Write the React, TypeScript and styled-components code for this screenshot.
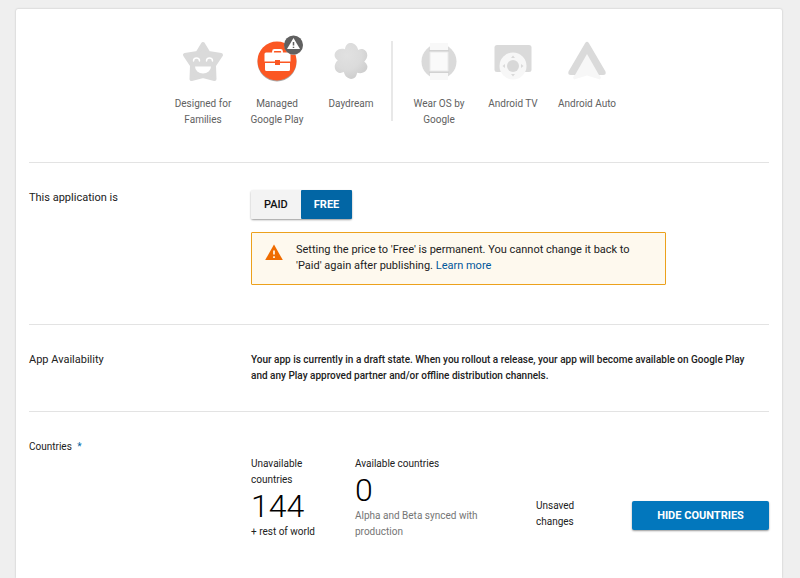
import React, { useState } from 'react';
import styled, { createGlobalStyle } from 'styled-components';

const GlobalStyle = createGlobalStyle`
  * { box-sizing: border-box; }
  body {
    margin: 0;
    background: #efefef;
    color: #212121;
    font-family: Roboto, "Liberation Sans", sans-serif;
    font-size: 10px;
    line-height: 16px;
  }
  button { font-family: inherit; }
`;

const Page = styled.div`
  display: flex;
  min-height: 100vh;
  padding: 9px 18px 0 16px;
`;

const Card = styled.main`
  flex: 1;
  min-width: 0;
  padding: 0 13px;
  background: #fff;
  border-radius: 2px 2px 0 0;
  box-shadow: 0 0 2px rgba(0, 0, 0, 0.24);
`;

const Programs = styled.section`
  display: flex;
  justify-content: center;
  height: 153px;
  padding: 24px 8px 0 0;
`;

const ProgramGroup = styled.div`
  display: flex;
`;

const GroupDivider = styled.div`
  width: 2px;
  height: 80px;
  margin: 8px 9px 0 3px;
  background: #e8e8e8;
`;

const ProgramItem = styled.div`
  display: flex;
  flex-direction: column;
  align-items: center;
  width: 74px;
  padding: 0 4px;
  color: #616161;
  text-align: center;
`;

const ProgramIcon = styled.div`
  position: relative;
  width: 56px;
  height: 56px;
  margin-bottom: 7px;

  svg { display: block; }
`;

const Badge = styled.svg`
  position: absolute;
  top: 0;
  right: 0;
`;

const Row = styled.section`
  display: grid;
  grid-template-columns: 3fr 7fr;
  padding: 27px 0;
  border-top: 1px solid #e3e3e3;
`;

const RowLabel = styled.h2<{ $small?: boolean }>`
  margin: 0;
  font-size: ${(p) => (p.$small ? 10 : 11)}px;
  font-weight: 400;
  line-height: 16px;
`;

const Required = styled.span`
  margin-left: 3px;
  color: #0067a3;
`;

const PricingBody = styled.div`
  padding-bottom: 12px;
`;

const Toggle = styled.div`
  display: flex;
  width: max-content;
  border-radius: 2px;
  box-shadow: 0 1px 2px rgba(0, 0, 0, 0.4);
`;

const ToggleButton = styled.button<{ $active: boolean }>`
  height: 29px;
  padding: 0 13px;
  border: 0;
  border-radius: 1px;
  background: ${(p) => (p.$active ? '#0266a5' : '#f3f3f3')};
  color: ${(p) => (p.$active ? '#fff' : '#111')};
  font-size: 11px;
  font-weight: ${(p) => (p.$active ? 700 : 500)};
`;

const Warning = styled.div`
  display: flex;
  gap: 12px;
  max-width: 415px;
  margin-top: 13px;
  padding: 9px 12px 10px;
  border: 1px solid #eca11c;
  border-radius: 1px;
  background: #fef9ee;
  font-size: 11px;

  svg { flex: none; margin-top: 1px; }
  p { margin: 0; }
`;

const Link = styled.a`
  color: #01579b;
  text-decoration: none;
`;

const Notice = styled.p`
  margin: 0;
  padding-right: 12px;
  font-weight: 500;
`;

const Countries = styled.div`
  display: flex;
  align-items: center;
  padding-top: 17px;
`;

const Stat = styled.div<{ $wide?: boolean }>`
  width: ${(p) => (p.$wide ? 136 : 72)}px;
  margin-right: ${(p) => (p.$wide ? 45 : 32)}px;
`;

const Figure = styled.div`
  color: #000;
  font-size: 32px;
  font-weight: 300;
  line-height: 36px;
`;

const Muted = styled.div`
  color: #757575;
`;

const Actions = styled.div`
  display: flex;
  flex: 1;
  align-items: flex-end;
  justify-content: space-between;
  margin-top: 32px;
`;

const Unsaved = styled.div`
  width: 48px;
`;

const PrimaryButton = styled.button`
  width: 137px;
  height: 29px;
  padding: 0;
  border: 0;
  border-radius: 2px;
  background: #0277bd;
  box-shadow: 0 1px 2px rgba(0, 0, 0, 0.4);
  color: #fff;
  font-size: 11px;
  font-weight: 700;
`;

const FamiliesIcon = () => (
  <svg width="56" height="56" viewBox="0 0 56 56">
    <path
      d="M28 11 33.500 20 46 22 39 32.500 39.500 46 28 43 16.500 46 17 32.500 10 22 22.500 20Z"
      fill="#dadada" stroke="#dadada" strokeWidth="4" strokeLinejoin="round"
    />
    <path d="M18.500 28a3 3 0 0 1 6 0M31.500 28a3 3 0 0 1 6 0" fill="none" stroke="#fff" strokeWidth="1.500" strokeLinecap="round" />
    <path d="M20 33.500h16a8 7 0 0 1-16 0Z" fill="#fff" />
  </svg>
);

const ManagedPlayIcon = () => (
  <>
    <svg width="56" height="56" viewBox="0 0 56 56">
      <circle cx="28" cy="29" r="19.500" fill="#a9a9a9" />
      <circle cx="28" cy="28" r="19.500" fill="#fb5723" />
      <path d="M24 20v-1.500a1.500 1.500 0 0 1 1.500-1.500h6a1.500 1.500 0 0 1 1.500 1.500V20" fill="none" stroke="#fff" strokeWidth="1.800" />
      <path d="M17 19.500h23a1.500 1.500 0 0 1 1.500 1.500v7.500H31V27h-5v1.500H15.500V21a1.500 1.500 0 0 1 1.500-1.500ZM16 30h10v2h5v-2h10v6.500a1.500 1.500 0 0 1-1.500 1.500h-22a1.500 1.500 0 0 1-1.500-1.500Z" fill="#fff" />
    </svg>
    <Badge width="22" height="22" viewBox="0 0 22 22">
      <circle cx="10.500" cy="13" r="9" fill="#bbb" />
      <circle cx="10.500" cy="12" r="9.500" fill="#606060" />
      <path d="m10.500 5 6.500 11H4Z" fill="#fff" />
      <path d="M10.500 9v3.500M10.500 13.700V15" stroke="#606060" strokeWidth="1.500" />
    </Badge>
  </>
);

const DaydreamIcon = () => (
  <svg width="56" height="56" viewBox="0 0 56 56">
    <defs>
      <radialGradient id="bloom" gradientUnits="userSpaceOnUse" cx="24" cy="22" r="24">
        <stop offset="0" stopColor="#e1e1e1" />
        <stop offset="0.600" stopColor="#dbdbdb" />
        <stop offset="1" stopColor="#cecece" />
      </radialGradient>
      <clipPath id="petals">
        {[0, 60, 120, 180, 240, 300].map((angle) => (
          <path
            key={angle}
            d="M28 28C22 24 20 15.500 24 11.500C28 8 36 11 35.500 21Z"
            transform={`rotate(${angle} 28 28)`}
          />
        ))}
        <circle cx="28" cy="28" r="10" />
      </clipPath>
    </defs>
    <rect x="8" y="8" width="40" height="40" fill="url(#bloom)" clipPath="url(#petals)" />
  </svg>
);

const WearIcon = () => (
  <svg width="56" height="56" viewBox="0 0 56 56">
    <circle cx="28" cy="28.500" r="17.500" fill="#dadada" />
    <path d="M19 10h18v7H19ZM19 40h18v7H19Z" fill="#f8f8f8" />
    <path d="M18 17h20v2H18ZM18 38h20v2H18Z" fill="#d2d2d2" />
    <rect x="19" y="19" width="18" height="19" fill="#fafafa" stroke="#eaeaea" />
  </svg>
);

const TvIcon = () => (
  <svg width="56" height="56" viewBox="0 0 56 56">
    <rect x="9.500" y="12" width="37" height="27" rx="2.500" fill="#dadada" />
    <circle cx="28" cy="33" r="13.500" fill="#f7f7f7" />
    <circle cx="28" cy="33" r="6" fill="#d8d8d8" />
    <path d="m28 22.500 2 2.500h-4ZM28 43.500l2-2.500h-4ZM17.500 33l2.500-2v4ZM38.500 33 36 31v4Z" fill="#dadada" />
  </svg>
);

const AutoIcon = () => (
  <svg width="56" height="56" viewBox="0 0 56 56">
    <path d="M28 20 42 44.500 41 46.500 28 42.500 15 46.500 14 44.500Z" fill="#f7f7f7" />
    <path d="M26.200 10q1.800-2.500 3.600 0L46.500 38.500q1 3.500-2.500 3.500h-4L28 21 16 42h-4q-3.500 0-2.500-3.500Z" fill="#dadada" />
  </svg>
);

const WarningIcon = () => (
  <svg width="20" height="20" viewBox="0 0 20 20" aria-hidden="true">
    <path d="m10 1.500 8.800 15.500H1.200Z" fill="#ef6c00" />
    <path d="M10 7.500v4M10 13.200V15" stroke="#fef9ee" strokeWidth="1.700" />
  </svg>
);

type Program = { name: string; Icon: () => React.JSX.Element };

const playPrograms: Program[] = [
  { name: 'Designed for Families', Icon: FamiliesIcon },
  { name: 'Managed Google Play', Icon: ManagedPlayIcon },
  { name: 'Daydream', Icon: DaydreamIcon },
];

const devicePrograms: Program[] = [
  { name: 'Wear OS by Google', Icon: WearIcon },
  { name: 'Android TV', Icon: TvIcon },
  { name: 'Android Auto', Icon: AutoIcon },
];

const ProgramList = ({ items }: { items: Program[] }) => (
  <ProgramGroup>
    {items.map(({ name, Icon }) => (
      <ProgramItem key={name}>
        <ProgramIcon><Icon /></ProgramIcon>
        {name}
      </ProgramItem>
    ))}
  </ProgramGroup>
);

export default function App() {
  const [price, setPrice] = useState<'paid' | 'free'>('free');

  return (
    <>
      <GlobalStyle />
      <Page>
        <Card>
          <Programs>
            <ProgramList items={playPrograms} />
            <GroupDivider />
            <ProgramList items={devicePrograms} />
          </Programs>

          <Row>
            <RowLabel>This application is</RowLabel>
            <PricingBody>
              <Toggle>
                <ToggleButton $active={price === 'paid'} aria-pressed={price === 'paid'} onClick={() => setPrice('paid')}>PAID</ToggleButton>
                <ToggleButton $active={price === 'free'} aria-pressed={price === 'free'} onClick={() => setPrice('free')}>FREE</ToggleButton>
              </Toggle>
              <Warning>
                <WarningIcon />
                <p>
                  Setting the price to 'Free' is permanent. You cannot change it back to 'Paid' again after publishing.{' '}
                  <Link href="#">Learn more</Link>
                </p>
              </Warning>
            </PricingBody>
          </Row>

          <Row>
            <RowLabel>App Availability</RowLabel>
            <Notice>
              Your app is currently in a draft state. When you rollout a release, your app will become available on Google Play
              and any Play approved partner and/or offline distribution channels.
            </Notice>
          </Row>

          <Row>
            <RowLabel $small>Countries <Required>*</Required></RowLabel>
            <Countries>
              <Stat>
                <div>Unavailable countries</div>
                <Figure>144</Figure>
                <div>+ rest of world</div>
              </Stat>
              <Stat $wide>
                <div>Available countries</div>
                <Figure>0</Figure>
                <Muted>Alpha and Beta synced with production</Muted>
              </Stat>
              <Actions>
                <Unsaved>Unsaved changes</Unsaved>
                <PrimaryButton>HIDE COUNTRIES</PrimaryButton>
              </Actions>
            </Countries>
          </Row>
        </Card>
      </Page>
    </>
  );
}
